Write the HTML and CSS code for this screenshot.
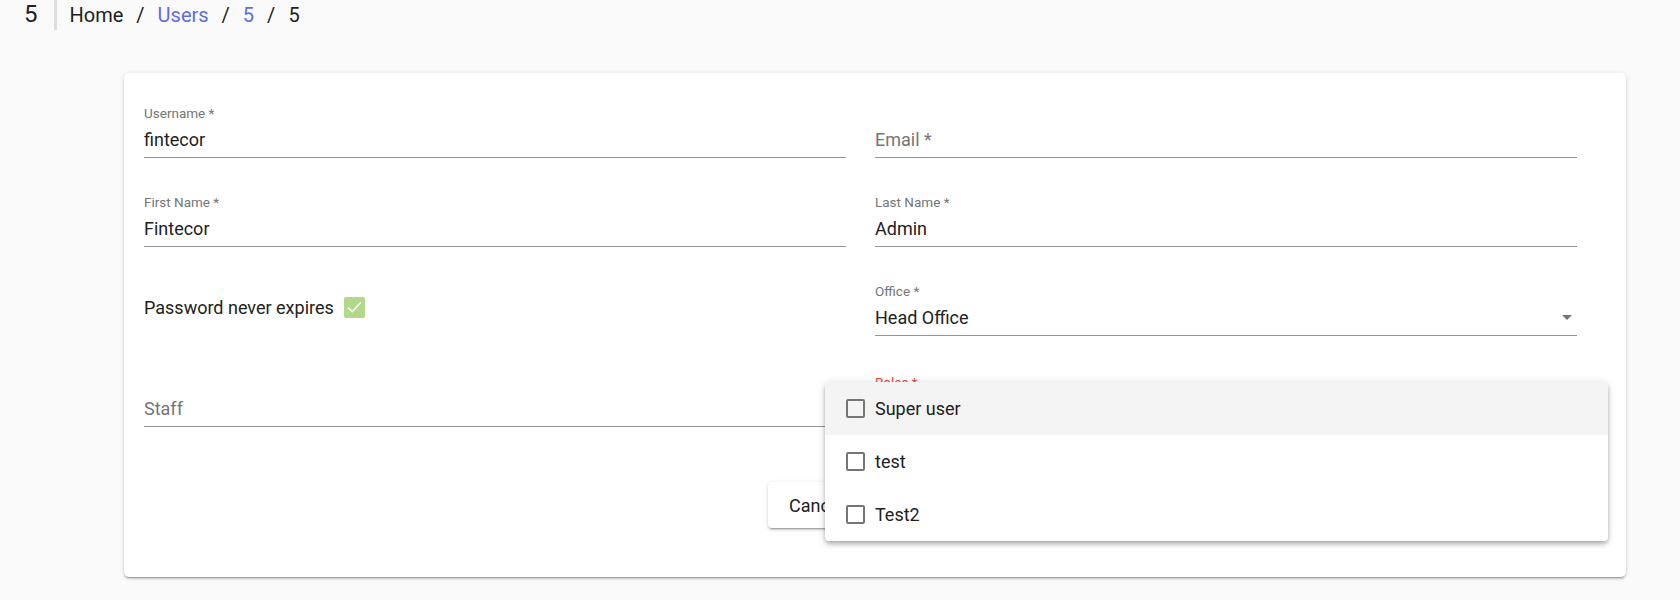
FILE: index.html
```html
<html>

<head>
    <link rel="stylesheet" href="styles.css">
</head>

<body>
    <div class="topbar">
        <span class="pageId">5</span>
        <span class="divider"></span>
        <div class="crumbs">
            <span>Home</span>
            <span class="sep">/</span>
            <a class="link">Users</a>
            <span class="sep">/</span>
            <a class="link">5</a>
            <span class="sep">/</span>
            <span>5</span>
        </div>
    </div>

    <div class="card">
        <div class="formGrid">
            <div class="field">
                <label>Username *</label>
                <div class="value">fintecor</div>
            </div>
            <div class="field">
                <label class="empty">&nbsp;</label>
                <div class="value placeholder">Email *</div>
            </div>
            <div class="field">
                <label>First Name *</label>
                <div class="value">Fintecor</div>
            </div>
            <div class="field">
                <label>Last Name *</label>
                <div class="value">Admin</div>
            </div>
            <div class="checkRow">
                <span>Password never expires</span>
                <span class="greenCheck">
                    <svg width="21" height="21" viewBox="0 0 21 21"><path d="M4 10.5l4.2 4.2L17 5.5" fill="none" stroke="#fff" stroke-width="1.6"/></svg>
                </span>
            </div>
            <div class="field">
                <label>Office *</label>
                <div class="value select">Head Office<span class="arrow"></span></div>
            </div>
            <div class="field lastRow">
                <label class="empty">&nbsp;</label>
                <div class="value placeholder">Staff</div>
            </div>
            <div class="field lastRow">
                <label class="error">Roles *</label>
                <div class="value">&nbsp;</div>
            </div>
        </div>
        <div class="actions">
            <button class="btn">Cancel</button>
            <button class="btn primary"></button>
        </div>

        <div class="menu">
            <div class="option active"><span class="box"></span>Super user</div>
            <div class="option"><span class="box"></span>test</div>
            <div class="option"><span class="box"></span>Test2</div>
        </div>
    </div>
</body>

</html>
```

FILE: styles.css
```css
body {
    margin: 0;
    padding: 0;
    background: #fafafa;
    font-family: Roboto, "Noto Sans", sans-serif;
    color: #212121;
}

.topbar {
    display: flex;
    align-items: center;
    height: 30px;
    padding-left: 24px;
}

.pageId {
    font-size: 24px;
    line-height: 30px;
    margin-top: -2px;
}

.divider {
    width: 3px;
    height: 30px;
    background: #dedede;
    margin: 0 13px 0 16px;
}

.crumbs {
    font-size: 20px;
    display: flex;
    align-items: center;
}

.crumbs .sep {
    margin: 0 13px;
}

.crumbs .link {
    color: #5c6ee6;
}

.card {
    position: relative;
    margin: 43px 0 0 124px;
    width: 1502px;
    height: 504px;
    box-sizing: border-box;
    padding: 32px 20px 0 20px;
    background: #fff;
    border-radius: 5px;
    box-shadow: 0 3px 1px -2px rgba(0, 0, 0, .2), 0 2px 2px 0 rgba(0, 0, 0, .14), 0 1px 5px 0 rgba(0, 0, 0, .12);
}

.formGrid {
    display: grid;
    grid-template-columns: 1fr 1fr;
}

.field {
    width: 96%;
    height: 89px;
}

.field.lastRow {
    margin-top: 2px;
    height: 87px;
}

.field label {
    display: block;
    font-size: 13.5px;
    line-height: 16px;
    color: #757575;
    margin-bottom: 7px;
}

.field label.error {
    color: #f44336;
}

.field .value {
    font-size: 18px;
    line-height: 24px;
    padding-bottom: 5px;
    border-bottom: 1px solid #949494;
}

.field .placeholder {
    color: #757575;
}

.select {
    position: relative;
}

.arrow {
    position: absolute;
    right: 5px;
    top: 9px;
    border-left: 5px solid transparent;
    border-right: 5px solid transparent;
    border-top: 5px solid #757575;
}

.checkRow {
    display: flex;
    align-items: center;
    height: 89px;
    padding-bottom: 40px;
    box-sizing: border-box;
    font-size: 18px;
}

.greenCheck {
    display: inline-block;
    flex: none;
    width: 21px;
    height: 21px;
    margin-left: 10px;
    border-radius: 2px;
    background: #b2d98a;
}

.greenCheck svg {
    display: block;
}

.actions {
    display: flex;
    justify-content: center;
    gap: 20px;
    margin-top: 21px;
}

.btn {
    font-family: Roboto, sans-serif;
    font-size: 18px;
    height: 46px;
    min-width: 97px;
    padding: 0 21px;
    border: none;
    border-radius: 4px;
    background: #fff;
    color: #212121;
    box-shadow: 0 3px 1px -2px rgba(0, 0, 0, .2), 0 2px 2px 0 rgba(0, 0, 0, .14), 0 1px 5px 0 rgba(0, 0, 0, .12);
}

.btn.primary {
    background: #5c6ee6;
}

.menu {
    position: absolute;
    left: 701px;
    top: 309px;
    width: 783px;
    background: #fff;
    border-radius: 4px;
    box-shadow: 0 2px 4px -1px rgba(0, 0, 0, .2), 0 4px 5px 0 rgba(0, 0, 0, .14), 0 1px 10px 0 rgba(0, 0, 0, .12);
    overflow: hidden;
}

.option {
    display: flex;
    align-items: center;
    height: 53px;
    padding-left: 21px;
    font-size: 18px;
}

.option.active {
    background: #f4f4f4;
}

.option .box {
    flex: none;
    box-sizing: border-box;
    width: 19px;
    height: 19px;
    border: 2px solid #757575;
    border-radius: 2px;
    margin-right: 10px;
}
```
